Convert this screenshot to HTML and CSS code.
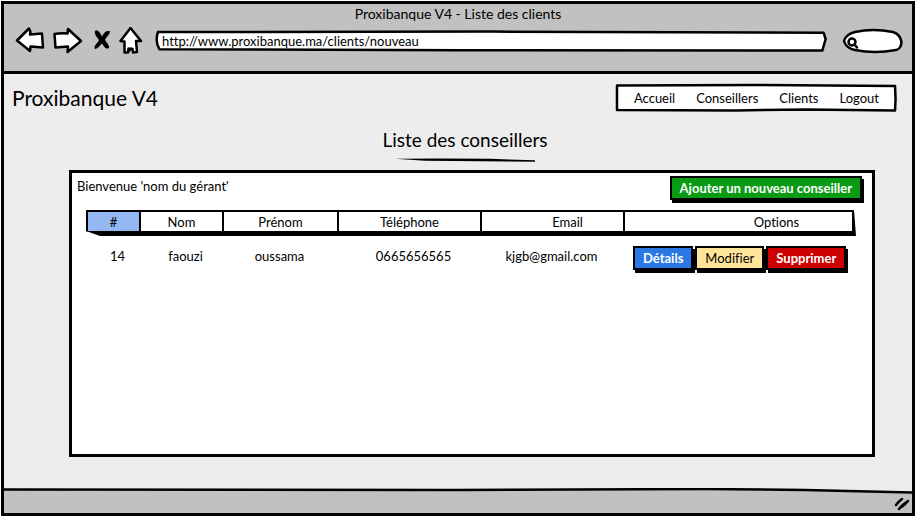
FILE: index.html
```html
<!DOCTYPE html>
<html lang="fr">
<head>
<meta charset="utf-8">
<meta name="viewport" content="width=device-width, initial-scale=1">
<title>Proxibanque V4 - Liste des clients</title>
<link rel="stylesheet" href="styles.css">
</head>
<body>
<div class="window">
  <header class="chrome">
    <div class="chrome-title">Proxibanque V4 - Liste des clients</div>
    <div class="toolbar">
      <div class="tools">
        <button type="button" class="tool" aria-label="Page précédente"><svg width="30" height="28" viewBox="0 0 30 28"><path class="ink" d="M2 13.500 14 1.500 15.500 5 15 7.500 27 6.500 28 20.500 15.500 19.500 15 24Z"/></svg></button>
        <button type="button" class="tool" aria-label="Page suivante"><svg width="30" height="28" viewBox="0 0 30 28"><path class="ink" d="M1.500 7Q7 6 14.500 6.500L15 2 28 14 14.500 25 15 19.500 2.500 20.500Z"/></svg></button>
        <button type="button" class="tool" aria-label="Arrêter"><svg width="20" height="28" viewBox="-3 0 20 28"><path d="M1 4C3 2 6 5 8 9.500 10 5 13 3 16 4.500 16 7 13 9 11 13 13 16 16 19 15 21 12 23 9.500 19 8 16.500 6 18 4 22 1 22 -1 19 3 17 5 13 3 10 0 7 1 4Z"/></svg></button>
        <button type="button" class="tool" aria-label="Accueil du navigateur"><svg width="24" height="28" viewBox="0 0 24 28"><path class="ink" d="M11.500 1 1.500 14 5.500 14.500 5.500 25.500 9 25.500 9.500 21.500 10.500 23.500 11.500 21.500 13.500 22 14 25.500 18 25 17 14 22 14Z"/></svg></button>
      </div>
      <div class="field address">
        <svg class="frame" viewBox="0 0 100 100" preserveAspectRatio="none" aria-hidden="true"><path class="ink" d="M.3 5 50 3 99.500 9 99.800 40 99.300 98 45 96 .5 91Q-.2 50 .3 5Z"/></svg>
        <input type="text" aria-label="Adresse" value="http://www.proxibanque.ma/clients/nouveau">
      </div>
      <div class="field search">
        <svg class="frame" viewBox="0 0 60 24" preserveAspectRatio="none" aria-hidden="true"><path class="ink" d="M12 3Q30-1 50 3 57 5 58.500 13 58 20 53 21 32 25 12 21 3 19 1 12 3 5 12 3Z"/></svg>
        <svg class="lens" width="12" height="12" viewBox="0 0 12 12" aria-hidden="true"><circle class="ink" cx="5" cy="5" r="3.500"/><path class="ink" d="M7.500 7.500 10 10.500"/></svg>
        <input type="search" aria-label="Rechercher">
      </div>
    </div>
  </header>

  <main class="page">
    <div class="topline">
      <div class="brand">Proxibanque V4</div>
      <nav class="menu" aria-label="Menu principal">
        <svg class="frame" viewBox="0 0 282 28" preserveAspectRatio="none" aria-hidden="true"><path class="ink" d="M1 1.500 140 1 280 2 280.500 15 280 26.500 190 25.500 120 26.500 1 26Z"/></svg>
        <a href="#">Accueil</a><a href="#">Conseillers</a><a href="#">Clients</a><a href="#">Logout</a>
      </nav>
    </div>
    <h1>Liste des conseillers</h1>
    <svg class="rule" width="140" height="4" viewBox="0 0 140 4" aria-hidden="true"><path d="M0 .7 45 .5 95 .8 140 2.300 140 3.800 85 3.200 30 2.800Z"/></svg>

    <section class="panel">
      <div class="panel-head">
        <p>Bienvenue 'nom du gérant'</p>
        <button type="button" class="btn add">Ajouter un nouveau conseiller</button>
      </div>
      <table>
        <colgroup><col class="c-id"><col class="c-nom"><col class="c-prenom"><col class="c-tel"><col class="c-email"><col></colgroup>
        <thead>
          <tr><th scope="col" class="sorted">#</th><th scope="col">Nom</th><th scope="col">Prénom</th><th scope="col">Téléphone</th><th scope="col" class="email">Email</th><th scope="col" class="options">Options</th></tr>
        </thead>
        <tbody>
          <tr>
            <td>14</td><td>faouzi</td><td class="centered">oussama</td><td>0665656565</td><td class="centered">kjgb@gmail.com</td>
            <td class="actions"><div><button type="button" class="btn details">Détails</button><button type="button" class="btn edit">Modifier</button><button type="button" class="btn delete">Supprimer</button></div></td>
          </tr>
        </tbody>
      </table>
    </section>
  </main>

  <footer class="status">
    <svg class="edge" viewBox="0 0 907 6" preserveAspectRatio="none" aria-hidden="true"><path class="paper" d="M0 0H907V4L780 1.500 0 1.500Z"/><path class="ink" d="M0 1.500 450 2 700 1 800 2 907 4.500"/></svg>
    <svg class="grip" width="16" height="14" viewBox="0 0 16 14" aria-hidden="true"><path class="ink" d="M2 8Q5 4 8 2M5 12Q9 7 14 4M6 11Q10 9 14 4"/></svg>
  </footer>
</div>
</body>
</html>
```

FILE: styles.css
```css
* { box-sizing: border-box; }

body {
  margin: 0;
  background: #fff;
  color: #000;
  font: 13px/20px Lato, "Open Sans", sans-serif;
  font-variant-ligatures: none;
}

button, input { font: inherit; color: inherit; }

.window {
  display: flex;
  flex-direction: column;
  min-height: calc(100vh - 2px);
  margin: 1px;
  border: 3px solid #000;
  background: #ededed;
}

.ink {
  fill: #fff;
  stroke: #000;
  stroke-width: 2.5px;
  stroke-linejoin: round;
  stroke-linecap: round;
  vector-effect: non-scaling-stroke;
}

.frame {
  position: absolute;
  inset: 0;
  width: 100%;
  height: 100%;
  overflow: visible;
}

/* Browser chrome */
.chrome {
  padding-bottom: 13px;
  border-bottom: 3px solid #000;
  background: #c1c1c1;
}

.chrome-title { font-size: 14px; text-align: center; }

.toolbar {
  display: flex;
  align-items: center;
  gap: 13px;
  height: 34px;
  padding: 0 9px 0 11px;
}

.tools {
  display: flex;
  gap: 8px;
}

.tool {
  padding: 0;
  border: 0;
  background: none;
}

.tool svg { display: block; }

.field { position: relative; }

.field input {
  position: relative;
  display: block;
  width: 100%;
  padding: 0 6px;
  border: 0;
  outline: 0;
  background: none;
}

.address { flex: 1; height: 20px; }
.address input { height: 19px; }

.search { width: 60px; height: 24px; margin-left: 3px; }
.search input { height: 24px; padding-left: 18px; }

.lens {
  position: absolute;
  left: 4px;
  top: 8px;
}

/* Page */
.page {
  display: flex;
  flex: 1;
  flex-direction: column;
  padding: 10px 37px 31px 65px;
}

.topline {
  display: flex;
  align-items: center;
  justify-content: space-between;
  margin: 0 -22px 0 -57px;
}

.brand { font-size: 21px; line-height: 24px; }

.menu {
  position: relative;
  display: flex;
  gap: 21px;
  padding: 4px 18px;
}

.menu a {
  position: relative;
  color: inherit;
  text-decoration: none;
}

h1 {
  align-self: center;
  margin: 16px 14px 6px 0;
  font-size: 19px;
  font-weight: 400;
  line-height: 24px;
}

.rule {
  align-self: center;
  margin: 0 14px 8px 0;
}

.panel {
  flex: 1;
  border: 3px solid #000;
  background: #fff;
}

.panel-head {
  display: flex;
  justify-content: space-between;
  padding: 3px 10px 0 5px;
}

.panel-head p { margin: 0; }

.btn {
  height: 24px;
  padding: 0 8px;
  border: 2px solid #000;
  box-shadow: 2px 3px 0 #000;
  color: #fff;
  font-weight: 700;
  line-height: 20px;
  white-space: nowrap;
}

.add { margin-bottom: 2px; background: #0a9b14; }
.details { background: #2b78e4; }
.edit { background: #ffe599; color: #000; font-weight: 400; }
.delete { background: #cc0000; }

/* Table */
table {
  width: calc(100% - 30px);
  margin: 8px 16px 0 14px;
  border-spacing: 0;
  table-layout: fixed;
}

.c-id { width: 53px; }
.c-nom { width: 83px; }
.c-prenom { width: 115px; }
.c-tel { width: 143px; }
.c-email { width: 143px; }

th {
  height: 26px;
  padding: 2px 0 0;
  border: solid #000;
  border-width: 2px 0 5px 2px;
  font-weight: 400;
  line-height: 17px;
}

.sorted {
  background: linear-gradient(#93b8f2, #93b8f2) padding-box;
  clip-path: polygon(0 0, 100% 0, 100% 100%, 14px 100%, 0 calc(100% - 5px));
}

.email { padding-left: 30px; }

.options {
  padding-left: 76px;
  border-right-width: 4px;
  clip-path: polygon(0 0, calc(100% - 2px) 0, 100% 100%, 0 100%);
}

td {
  padding: 10px 0 0 10px;
  text-align: center;
  vertical-align: top;
}

td.centered { padding-left: 0; }

td.actions div { display: flex; gap: 2px; }

/* Status bar */
.status {
  position: relative;
  display: flex;
  align-items: center;
  justify-content: flex-end;
  height: 25px;
  padding: 6px 2px 0;
  background: #c1c1c1;
}

.edge {
  position: absolute;
  inset: 0 0 auto;
  width: 100%;
  height: 6px;
}

.edge .ink, .grip .ink { fill: none; }
.edge .paper { fill: #ededed; }
```
